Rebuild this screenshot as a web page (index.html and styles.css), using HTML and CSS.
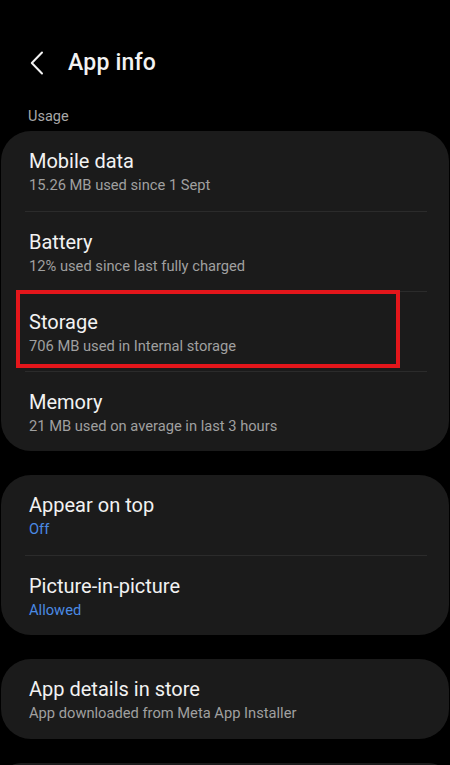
FILE: index.html
```html
<!DOCTYPE html>
<html lang="en">
<head>
<meta charset="utf-8">
<title>App info</title>
<link rel="stylesheet" href="styles.css">
</head>
<body>
<header class="header">
  <svg class="back" width="14" height="24" viewBox="0 0 14 24"><path d="M12 1.5 L1.8 12 L12 22.5" fill="none" stroke="#f2f2f2" stroke-width="2" stroke-linecap="round" stroke-linejoin="round"/></svg>
  <h1 class="title">App info</h1>
</header>
<div class="section-label">Usage</div>
<section class="card">
  <div class="row"><div class="row-title">Mobile data</div><div class="row-sub">15.26 MB used since 1 Sept</div></div>
  <div class="row"><div class="row-title">Battery</div><div class="row-sub">12% used since last fully charged</div></div>
  <div class="row row-marked"><div class="row-title">Storage</div><div class="row-sub">706 MB used in Internal storage</div><span class="highlight"></span></div>
  <div class="row"><div class="row-title">Memory</div><div class="row-sub">21 MB used on average in last 3 hours</div></div>
</section>
<section class="card">
  <div class="row"><div class="row-title">Appear on top</div><div class="row-sub accent">Off</div></div>
  <div class="row"><div class="row-title">Picture-in-picture</div><div class="row-sub accent">Allowed</div></div>
</section>
<section class="card">
  <div class="row"><div class="row-title">App details in store</div><div class="row-sub">App downloaded from Meta App Installer</div></div>
</section>
<section class="card card-peek"></section>
</body>
</html>
```

FILE: styles.css
```css
html, body {
  margin: 0;
  padding: 0;
  background: #000;
  font-family: Roboto, "Noto Sans", "Liberation Sans", sans-serif;
  color: #f2f2f2;
  overflow: hidden;
}
.header {
  display: flex;
  align-items: center;
  height: 34px;
  margin-top: 46px;
}
.back {
  display: block;
  margin-left: 30px;
}
.title {
  margin: 0 0 0 24px;
  font-size: 23px;
  font-weight: 500;
  line-height: 34px;
  letter-spacing: 0.2px;
}
.section-label {
  padding: 27px 28px 0;
  height: 20px;
  margin-bottom: 4px;
  font-size: 14.5px;
  line-height: 20px;
  color: #a8a8a8;
}
.card {
  margin: 0 1px 24px;
  background: #1b1b1b;
  border-radius: 30px;
}
.card-peek {
  height: 40px;
  margin-bottom: 0;
}
.row {
  position: relative;
  box-sizing: border-box;
  height: 80px;
  margin: 0 22px 0 24px;
  padding: 18px 0 0 4px;
}
.row + .row {
  border-top: 1px solid #2b2b2b;
}
.row-title {
  font-size: 20px;
  line-height: 24px;
  color: #f2f2f2;
  white-space: nowrap;
}
.row-sub {
  margin-top: 2px;
  font-size: 14.7px;
  line-height: 20px;
  color: #a0a0a0;
  white-space: nowrap;
}
.accent {
  color: #4a8ae4;
}
.highlight {
  position: absolute;
  left: -9px;
  top: -2px;
  width: 384px;
  height: 78px;
  box-sizing: border-box;
  border: 4px solid #e4161b;
}
```
